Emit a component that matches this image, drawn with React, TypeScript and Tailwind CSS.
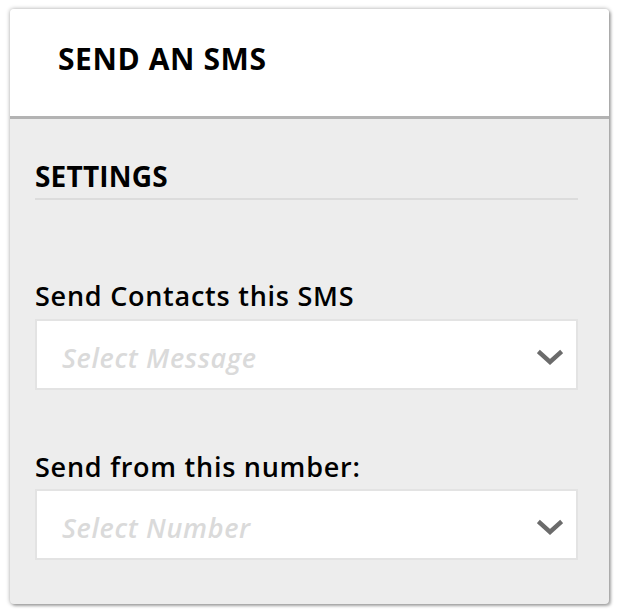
import React from "react";

function Chevron() {
  return (
    <svg width="26" height="18" viewBox="0 0 26 18" className="shrink-0">
      <path d="M3 4 L13 13 L23 4" fill="none" stroke="#6b6b6b" strokeWidth="4.5" strokeLinecap="square" strokeLinejoin="miter" />
    </svg>
  );
}

function SelectBox({ placeholder }: { placeholder: string }) {
  return (
    <div className="h-[71px] bg-white border-2 border-[#e3e3e3] flex items-center justify-between pl-[25px] pr-[13px] pt-[7px]">
      <span className="text-[27px] font-semibold italic text-[#dadada] tracking-[0.65px]">{placeholder}</span>
      <Chevron />
    </div>
  );
}

export default function App() {
  return (
    <div className="w-[620px] h-[616px] bg-white pt-[9px] pl-[10px]" style={{ fontFamily: '"Open Sans", sans-serif' }}>
      <div className="w-[599px] h-[595px] rounded-[4px] overflow-hidden bg-[#ededed] shadow-[0_0_4px_rgba(0,0,0,0.35),2px_2px_3px_rgba(0,0,0,0.25)] flex flex-col">
        <div className="h-[110px] shrink-0 bg-white border-b-[3px] border-[#b3b3b3] flex items-center pl-[48px] pb-[8px]">
          <h1 className="text-[30px] font-bold text-black tracking-[0.6px]">SEND AN SMS</h1>
        </div>
        <div className="pl-[25px] pr-[31px] pt-[41px]">
          <div className="text-[28px] font-bold text-black leading-[32px] pb-[6px] border-b-2 border-[#dcdcdc] tracking-[0.2px]">SETTINGS</div>
          <div className="mt-[80px] text-[27px] font-semibold text-black leading-[32px] mb-[7px] tracking-[0.75px]">Send Contacts this SMS</div>
          <SelectBox placeholder="Select Message" />
          <div className="mt-[61px] text-[27px] font-semibold text-black leading-[32px] mb-[6px] tracking-[0.75px]">Send from this number:</div>
          <SelectBox placeholder="Select Number" />
        </div>
      </div>
    </div>
  );
}
